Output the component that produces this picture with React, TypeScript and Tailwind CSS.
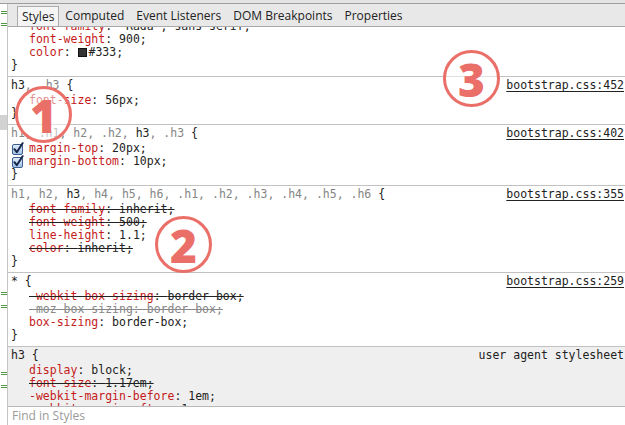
import React from "react";
import clsx from "clsx";

type Part = [string, boolean];

const SANS = "font-['Open_Sans',sans-serif]";
const MONO = "font-['DejaVu_Sans_Mono',monospace]";

function Mark({ className }: { className: string }) {
  return <div className={clsx("ml-[1px] h-[3px] w-[6px] border-y border-[#4f9a43]", className)} />;
}

function Check() {
  return (
    <svg width="12" height="13" viewBox="0 0 12 13">
      <defs>
        <linearGradient id="cb" x1="0" y1="0" x2="0" y2="1">
          <stop offset="0" stopColor="#e3eefa" />
          <stop offset="1" stopColor="#9dbfe6" />
        </linearGradient>
      </defs>
      <rect x="0.5" y="2.5" width="10" height="10" rx="1.5" fill="url(#cb)" stroke="#3d5e8e" />
      <path d="M2.4 7.2 L4.8 10.2 L10.6 1.2" fill="none" stroke="#16264a" strokeWidth="2" strokeLinecap="round" strokeLinejoin="round" />
    </svg>
  );
}

function Prop({
  name,
  value,
  struck,
  dim,
  check,
  children
}: {
  name: string;
  value?: string;
  struck?: boolean;
  dim?: boolean;
  check?: boolean;
  children?: React.ReactNode;
}) {
  return (
    <div className="flex h-[13px] items-center whitespace-pre leading-[13px]">
      <div className="flex h-[13px] w-[18px] items-end pl-[1px]">{check && <Check />}</div>
      <span className={clsx(dim ? "text-[#888]" : "text-[#222]", struck && "line-through")}>
        <span className={dim ? "" : "text-[#c41a1a]"}>{name}</span>
        {": "}
        {children}
        {value}
        {";"}
      </span>
    </div>
  );
}

function Rule({
  parts,
  source,
  link = true,
  shaded,
  className,
  children
}: {
  parts: Part[];
  source: string;
  link?: boolean;
  shaded?: boolean;
  className?: string;
  children: React.ReactNode;
}) {
  return (
    <div className={clsx("border-t border-[#c2c2c2] pt-[2px] pb-[4px] pl-[3px]", shaded && "bg-[#efefef]", className)}>
      <div className="flex h-[13px] items-center justify-between leading-[13px]">
        <div className="whitespace-pre">
          {parts.map(([t, on], i) => (
            <span key={i} className={on ? "text-[#222]" : "text-[#858585]"}>
              {t}
            </span>
          ))}
          <span className="text-[#222]">{" {"}</span>
        </div>
        <span className={clsx("pr-[1px] text-[#222]", link && "underline underline-offset-2")}>{source}</span>
      </div>
      <div className="mt-[2px]">{children}</div>
      <div className="h-[13px] leading-[13px] text-[#222]">{"}"}</div>
    </div>
  );
}

function Badge({ n, className }: { n: string; className: string }) {
  return (
    <div
      className={clsx(
        "absolute flex h-[57px] w-[57px] items-center justify-center rounded-full border-[3px] border-[#eb6f69] bg-white/50",
        className
      )}
    >
      <span className={clsx(SANS, "text-[46px] font-extrabold leading-none text-[#eb6f69]")}>{n}</span>
    </div>
  );
}

export default function App() {
  const tabs = ["Styles", "Computed", "Event Listeners", "DOM Breakpoints", "Properties"];

  const heads: Part[] = ["h1", "h2", "h3", "h4", "h5", "h6", ".h1", ".h2", ".h3", ".h4", ".h5", ".h6"].flatMap(
    (s, i, a) => [[s, s === "h3"], [i < a.length - 1 ? ", " : "", false]] as Part[]
  );

  return (
    <div className="relative flex h-[425px] w-[625px] flex-col overflow-hidden bg-white">
      <div className="h-[4px] shrink-0 border-b border-[#9e9e9e] bg-[#e4e4e4]" />

      <div className="flex min-h-0 flex-1">
        {/* gutter from the elements pane */}
        <div className="flex w-[8px] shrink-0 flex-col border-r border-[#c6c6c6] bg-white">
          <Mark className="mt-[7px]" />
          <Mark className="mt-[9px]" />
          <div className="mt-[89px] h-[15px] w-full bg-[#d2d2d2]" />
          <Mark className="mt-[162px]" />
          <Mark className="mt-[10px]" />
          <Mark className="mt-[64px]" />
          <Mark className="mt-[10px]" />
        </div>

        <div className="flex min-w-0 flex-1 flex-col">
          <div className={clsx(SANS, "flex h-[23px] shrink-0 items-end border-b border-[#a9a9a9] bg-[#e8e8e8] pl-[9px] text-[12px] text-[#222]")}>
            {tabs.map((t, i) => (
              <div
                key={t}
                className={clsx(
                  "flex h-[20px] items-center",
                  i === 0 ? "border-x border-t border-[#ababab] bg-[#f5f5f5] pl-[4px] pr-[4px]" : "px-[6px]"
                )}
              >
                {t}
              </div>
            ))}
          </div>

          <div className={clsx(MONO, "min-h-0 flex-1 overflow-hidden text-[11.5px]")}>
            <Rule parts={[["h1, .h1", true]]} source="" className="-mt-[24px] border-t-0">
              <Prop name="font-family" value={'"Rada", sans-serif'} />
              <Prop name="font-weight" value="900" />
              <Prop name="color">
                <span className="mx-[1px] inline-block h-[9px] w-[9px] border border-[#111] bg-[#333] align-[-1px]" />
                #333
              </Prop>
            </Rule>

            <Rule parts={[["h3", true], [", .h3", false]]} source="bootstrap.css:452">
              <Prop name="font-size" value="56px" />
            </Rule>

            <Rule
              parts={[["h1, .h1, h2, .h2, ", false], ["h3", true], [", .h3", false]]}
              source="bootstrap.css:402"
            >
              <Prop name="margin-top" value="20px" check />
              <Prop name="margin-bottom" value="10px" check />
            </Rule>

            <Rule parts={heads} source="bootstrap.css:355">
              <Prop name="font-family" value="inherit" struck />
              <Prop name="font-weight" value="500" struck />
              <Prop name="line-height" value="1.1" />
              <Prop name="color" value="inherit" struck />
            </Rule>

            <Rule parts={[["*", true]]} source="bootstrap.css:259">
              <Prop name="-webkit-box-sizing" value="border-box" struck />
              <Prop name="-moz-box-sizing" value="border-box" struck dim />
              <Prop name="box-sizing" value="border-box" />
            </Rule>

            <Rule parts={[["h3", true]]} source="user agent stylesheet" link={false} shaded>
              <Prop name="display" value="block" />
              <Prop name="font-size" value="1.17em" struck />
              <Prop name="-webkit-margin-before" value="1em" />
              <Prop name="-webkit-margin-after" value="1em" />
            </Rule>
          </div>

          <div className={clsx(SANS, "flex h-[19px] shrink-0 items-center border-t border-[#b9b9b9] bg-white pl-[4px] text-[12px] text-[#9a9a9a]")}>
            Find in Styles
          </div>
        </div>
      </div>

      <Badge n="1" className="left-[15px] top-[86px]" />
      <Badge n="2" className="left-[155px] top-[216px]" />
      <Badge n="3" className="left-[443px] top-[50px]" />
    </div>
  );
}
